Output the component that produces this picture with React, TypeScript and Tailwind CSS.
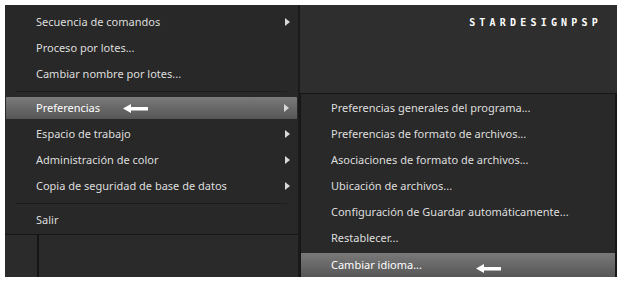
import React from "react";

const font = { fontFamily: '"Noto Sans", "Open Sans", sans-serif' };

function Tri() {
  return (
    <svg width="5" height="8" viewBox="0 0 5 8" className="absolute right-[8px] top-1/2 -translate-y-1/2">
      <path d="M0 0 L5 4 L0 8 Z" fill="#d8d8d8" />
    </svg>
  );
}

function WArrow() {
  return (
    <svg width="25" height="9" viewBox="0 0 25 9">
      <path d="M0 4.5 L8 0 L8 3 L25 3 L25 6.5 L8 6.5 L8 9 Z" fill="#ffffff" />
    </svg>
  );
}

function Item({ label, sub, active, arrow, pl }: { label: string; sub?: boolean; active?: boolean; arrow?: boolean; pl: string }) {
  return (
    <div className="relative h-[26px] flex items-stretch">
      <div
        className={
          "relative flex-1 flex items-center " +
          pl +
          (active
            ? " my-[2px] mx-[1px] bg-gradient-to-b from-[#7a7a7a] to-[#565656] text-white rounded-[1px]"
            : " text-[#dedede]")
        }
      >
        <span className={active ? "-ml-[1px]" : ""}>{label}</span>
        {arrow && (
          <span className="ml-[23px] flex items-center">
            <WArrow />
          </span>
        )}
        {sub && <Tri />}
      </div>
    </div>
  );
}

function Sep() {
  return (
    <div className="h-[8px] flex items-center px-[11px]">
      <div className="h-px flex-1 bg-[#3c3c3c] border-t border-[#1c1c1c]" />
    </div>
  );
}

export default function App() {
  return (
    <div className="w-[622px] h-[283px] bg-white pt-[5px] pl-[5px] text-[11px]" style={font}>
      <div className="w-[612px] h-[272px] flex bg-[#2a2a2a]">
        <div className="w-[293px] flex flex-col bg-[#282828]">
          <div className="pt-[4px] flex flex-col">
            <Item label="Secuencia de comandos" sub pl="pl-[31px]" />
            <Item label="Proceso por lotes..." pl="pl-[31px]" />
            <Item label="Cambiar nombre por lotes..." pl="pl-[31px]" />
            <Sep />
            <Item label="Preferencias" sub active arrow pl="pl-[31px]" />
            <Item label="Espacio de trabajo" sub pl="pl-[31px]" />
            <Item label="Administración de color" sub pl="pl-[31px]" />
            <Item label="Copia de seguridad de base de datos" sub pl="pl-[31px]" />
            <Sep />
            <Item label="Salir" pl="pl-[31px]" />
          </div>
          <div className="mt-[1px] flex-1 flex border-t border-[#161616]">
            <div className="w-[32px] bg-[#2b2b2b]" />
            <div className="w-[2px] bg-[#141414]" />
            <div className="flex-1 bg-[#2a2a2a]" />
          </div>
        </div>
        <div className="w-[2px] bg-[#1a1a1a]" />
        <div className="flex-1 flex flex-col bg-[#2e2e2e]">
          <div className="h-[88px] flex justify-end pr-[15px] pt-[13px]">
            <span
              className="text-white text-[10px] font-bold leading-none tracking-[4.2px] h-[10px]"
              style={{ fontFamily: '"DejaVu Sans Mono", monospace' }}
            >
              STARDESIGNPSP
            </span>
          </div>
          <div className="flex-1 flex flex-col bg-[#292929] border-t border-l border-r-2 border-[#161616] pt-[1px]">
            <Item label="Preferencias generales del programa..." pl="pl-[30px]" />
            <Item label="Preferencias de formato de archivos..." pl="pl-[30px]" />
            <Item label="Asociaciones de formato de archivos..." pl="pl-[30px]" />
            <Item label="Ubicación de archivos..." pl="pl-[30px]" />
            <Item label="Configuración de Guardar automáticamente..." pl="pl-[30px]" />
            <Item label="Restablecer..." pl="pl-[30px]" />
            <div className="relative h-[26px] flex items-stretch">
              <div className="relative flex-1 flex items-center pl-[30px] mt-[2px] bg-gradient-to-b from-[#7a7a7a] to-[#565656] text-white">
                <span>Cambiar idioma...</span>
                <span className="ml-[54px] mt-[6px] flex items-center">
                  <WArrow />
                </span>
              </div>
            </div>
          </div>
        </div>
      </div>
    </div>
  );
}
